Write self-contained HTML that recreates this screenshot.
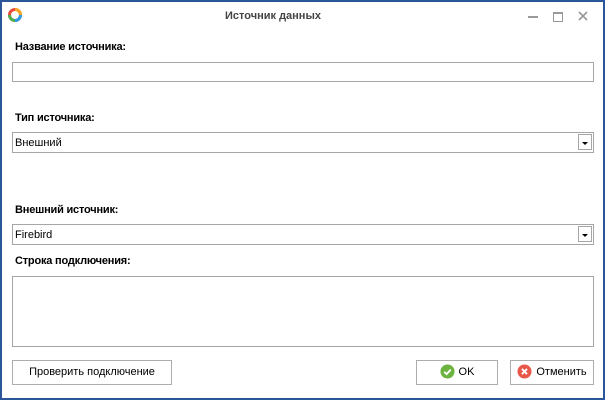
<!DOCTYPE html>
<html><head><style>
body{margin:0;width:605px;height:400px;overflow:hidden;font-family:"Liberation Sans",sans-serif;font-size:11px;color:#000}
.win{position:absolute;left:0;top:0;width:601px;height:396px;background:#fff;border:2px solid #2b579a}
.a{position:absolute}
.lbl{font-weight:bold;font-size:11px;letter-spacing:-0.2px}
.box{border:1px solid #a6a6a6;background:#fff;box-sizing:border-box}
.btn{border:1px solid #adadad;background:#fff;box-sizing:border-box;text-align:center;line-height:22px;font-size:11px}
.dd{position:absolute;right:1px;top:1px;width:14px;height:16px;border:1px solid #a6a6a6;box-sizing:border-box}
.dd:after{content:"";position:absolute;left:3px;top:7px;border-left:3px solid transparent;border-right:3px solid transparent;border-top:3px solid #000}
</style></head><body>
<div class="win"></div>
<svg class="a" style="left:7px;top:7px" width="16" height="16" viewBox="0 0 16 16">
<circle cx="8" cy="8" r="5.5" fill="none" stroke="#e84c3d" stroke-width="3"/>
<path d="M8 2.5A5.5 5.5 0 0 1 13.5 8" fill="none" stroke="#f5a623" stroke-width="3"/>
<path d="M13.5 8A5.5 5.5 0 0 1 8 13.5" fill="none" stroke="#2e9be6" stroke-width="3"/>
<path d="M8 13.5A5.5 5.5 0 0 1 2.5 8" fill="none" stroke="#4caf50" stroke-width="3"/>
</svg>
<div class="a" style="left:225px;top:10px;font-size:11px;font-weight:bold;color:#444">Источник данных</div>
<div class="a" style="left:528px;top:16px;width:10px;height:2px;background:#999"></div>
<div class="a" style="left:553px;top:12px;width:10px;height:10px;border:1px solid #999;border-top-width:2px;box-sizing:border-box"></div>
<svg class="a" style="left:578px;top:11px" width="10" height="10"><path d="M1 1L9 9M9 1L1 9" stroke="#999" stroke-width="1.6"/></svg>
<div class="a lbl" style="left:15px;top:41px">Название источника:</div>
<div class="a box" style="left:12px;top:62px;width:582px;height:20px"></div>
<div class="a lbl" style="left:15px;top:112px">Тип источника:</div>
<div class="a box" style="left:12px;top:132px;width:582px;height:21px"><span class="a" style="left:2px;top:4px">Внешний</span><div class="dd"></div></div>
<div class="a lbl" style="left:15px;top:204px">Внешний источник:</div>
<div class="a box" style="left:12px;top:224px;width:582px;height:21px"><span class="a" style="left:2px;top:4px">Firebird</span><div class="dd"></div></div>
<div class="a lbl" style="left:15px;top:255px">Строка подключения:</div>
<div class="a box" style="left:12px;top:276px;width:582px;height:71px"></div>
<div class="a btn" style="left:12px;top:360px;width:160px;height:25px">Проверить подключение</div>
<div class="a btn" style="left:416px;top:360px;width:82px;height:25px"><svg style="vertical-align:-4px;margin-right:4px" width="15" height="15" viewBox="0 0 16 16"><circle cx="8" cy="8" r="7.5" fill="#6cb33f"/><path d="M4.5 8.3l2.5 2.5 4.5-4.8" stroke="#fff" stroke-width="2" fill="none"/></svg>OK</div>
<div class="a btn" style="left:510px;top:360px;width:84px;height:25px"><svg style="vertical-align:-4px;margin-right:4px" width="15" height="15" viewBox="0 0 16 16"><circle cx="8" cy="8" r="7.5" fill="#e8594a"/><path d="M5.3 5.3l5.4 5.4M10.7 5.3l-5.4 5.4" stroke="#fff" stroke-width="2"/></svg>Отменить</div>
</body></html>
